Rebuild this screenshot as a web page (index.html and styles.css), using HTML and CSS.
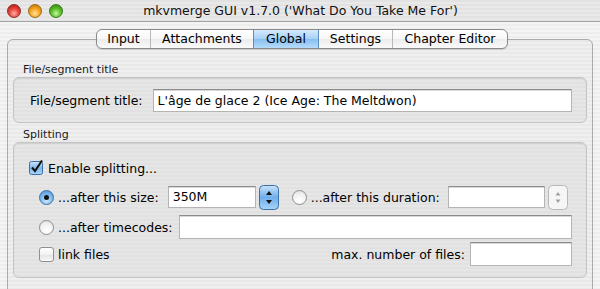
FILE: index.html
```html
<!DOCTYPE html>
<html>
<head>
    <title>mkvmerge GUI</title>
    <link rel="stylesheet" href="styles.css">
</head>
<body>
<div class="window">
    <div class="titlebar">
        <div class="lights">
            <span class="light red"></span>
            <span class="light yellow"></span>
            <span class="light green"></span>
        </div>
        <div class="title">mkvmerge GUI v1.7.0 ('What Do You Take Me For')</div>
    </div>

    <div class="content">
        <ul class="tabs">
            <li class="tab tab-input">Input</li>
            <li class="tab tab-attach">Attachments</li>
            <li class="tab tab-global selected">Global</li>
            <li class="tab tab-settings">Settings</li>
            <li class="tab tab-chapter">Chapter Editor</li>
        </ul>

        <div class="pane">
            <div class="group-title first">File/segment title</div>
            <div class="group title-group">
                <label class="field-label">File/segment title:</label>
                <div class="textbox grow">L'âge de glace 2 (Ice Age: The Meltdwon)</div>
            </div>

            <div class="group-title">Splitting</div>
            <div class="group split-group">
                <div class="row row-enable">
                    <span class="check checked">
                        <svg width="15" height="15" viewBox="0 0 15 15">
                            <defs>
                                <linearGradient id="blueg" x1="0" y1="0" x2="0" y2="1">
                                    <stop offset="0" stop-color="#cfe6fb"/>
                                    <stop offset="0.5" stop-color="#7db8ec"/>
                                    <stop offset="1" stop-color="#aad6fb"/>
                                </linearGradient>
                            </defs>
                            <rect x="0.5" y="1.5" width="13" height="13" rx="2" fill="url(#blueg)" stroke="#3a6fa8"/>
                            <path d="M3 7.5 L6 11 L13 0.5" fill="none" stroke="#111" stroke-width="2"/>
                        </svg>
                    </span>
                    <span class="ctrl-label">Enable splitting...</span>
                </div>

                <div class="row row-size">
                    <span class="radio on"><span class="dot"></span></span>
                    <span class="ctrl-label">...after this size:</span>
                    <div class="textbox size-box">350M</div>
                    <span class="stepper active">
                        <svg width="20" height="25" viewBox="0 0 20 25">
                            <defs>
                                <linearGradient id="stepg" x1="0" y1="0" x2="0" y2="1">
                                    <stop offset="0" stop-color="#c9e3fb"/>
                                    <stop offset="0.5" stop-color="#6eaeea"/>
                                    <stop offset="1" stop-color="#a8d4fa"/>
                                </linearGradient>
                            </defs>
                            <rect x="0.5" y="0.5" width="19" height="24" rx="4" fill="url(#stepg)" stroke="#3a6fa8"/>
                            <path d="M10 6 L13 10 L7 10 Z M10 19 L13 15 L7 15 Z" fill="#111"/>
                        </svg>
                    </span>
                    <span class="radio off second"></span>
                    <span class="ctrl-label">...after this duration:</span>
                    <div class="textbox duration-box"></div>
                    <span class="stepper">
                        <svg width="20" height="25" viewBox="0 0 20 25">
                            <rect x="0.5" y="0.5" width="19" height="24" rx="4" fill="#f6f6f6" stroke="#b8b8b8"/>
                            <path d="M10 7 L12.5 10.5 L7.5 10.5 Z M10 18 L12.5 14.5 L7.5 14.5 Z" fill="#a0a0a0"/>
                        </svg>
                    </span>
                </div>

                <div class="row row-timecodes">
                    <span class="radio off"></span>
                    <span class="ctrl-label">...after timecodes:</span>
                    <div class="textbox grow"></div>
                </div>

                <div class="row row-link">
                    <span class="check"></span>
                    <span class="ctrl-label">link files</span>
                    <span class="spacer"></span>
                    <span class="ctrl-label">max. number of files:</span>
                    <div class="textbox max-box"></div>
                </div>
            </div>
        </div>
    </div>
</div>
</body>
</html>
```

FILE: styles.css
```css
body {
    margin: 0;
    font-family: "DejaVu Sans", "Liberation Sans", sans-serif;
    font-size: 12px;
    color: #000;
}

.window {
    width: 600px;
    height: 289px;
    overflow: hidden;
    background: repeating-linear-gradient(to bottom, #ededed 0, #ededed 2px, #f4f4f4 2px, #f4f4f4 4px);
}

.titlebar {
    height: 21px;
    display: flex;
    align-items: center;
    border-bottom: 1px solid #a3a3a3;
    background: repeating-linear-gradient(to bottom, #e2e2e2 0, #e2e2e2 2px, #e9e9e9 2px, #e9e9e9 4px);
}

.lights {
    display: flex;
    gap: 7px;
    padding-left: 7px;
}

.light {
    width: 14px;
    height: 14px;
    border-radius: 50%;
    box-sizing: border-box;
}

.light.red {
    background: radial-gradient(circle at 50% 70%, #ffb0a8 0, #e8463c 45%, #a31610 100%);
    border: 1px solid #8e2a24;
}

.light.yellow {
    background: radial-gradient(circle at 50% 70%, #ffe4a0 0, #f5a623 45%, #b86e00 100%);
    border: 1px solid #9a6a16;
}

.light.green {
    background: radial-gradient(circle at 50% 70%, #c8f7a0 0, #5cc02a 45%, #2a7c0a 100%);
    border: 1px solid #3d7a20;
}

.title {
    flex: 1;
    text-align: center;
    margin-right: 62px;
    font-size: 12.5px;
    color: #111;
}

.content {
    padding-top: 7px;
}

.tabs {
    list-style: none;
    margin: 0 0 0 96px;
    padding: 0;
    display: flex;
    height: 18px;
    width: max-content;
    border: 1px solid #8a8a8a;
    border-radius: 6px;
    overflow: hidden;
    position: relative;
    z-index: 1;
    background: linear-gradient(to bottom, #ffffff 0, #f7f7f7 50%, #ececec 51%, #fafafa 100%);
    box-shadow: 0 1px 1px rgba(0, 0, 0, 0.15);
}

.tab {
    line-height: 18px;
    font-size: 12.5px;
    text-align: center;
    border-left: 1px solid #b9b9b9;
}

.tab-input {
    width: 53px;
    border-left: none;
}

.tab-attach {
    width: 102px;
}

.tab-global {
    width: 65px;
}

.tab-settings {
    width: 73px;
}

.tab-chapter {
    width: 114px;
}

.tab.selected {
    background: linear-gradient(to bottom, #d5eafc 0, #a6d0f6 50%, #86bff0 51%, #b6dcfb 100%);
    border-left-color: #5d8cc0;
    border-right: 1px solid #5d8cc0;
    width: 64px;
}

.tab.selected + .tab {
    border-left: none;
}

.pane {
    margin: -10px 7px 0 7px;
    height: 260px;
    border: 1px solid #aaaaaa;
    border-radius: 6px;
    padding: 0 5px;
    background: repeating-linear-gradient(to bottom, #e9e9e9 0, #e9e9e9 2px, #efefef 2px, #efefef 4px);
}

.group-title {
    font-size: 11px;
    line-height: 14px;
    height: 14px;
    padding-left: 10px;
    margin-top: 5px;
    color: #1a1a1a;
}

.group-title.first {
    margin-top: 23px;
}

.group {
    border: 1px solid #c4c4c4;
    border-radius: 6px;
    background: repeating-linear-gradient(to bottom, #e1e1e1 0, #e1e1e1 2px, #e6e6e6 2px, #e6e6e6 4px);
    box-shadow: inset 0 1px 1px rgba(0, 0, 0, 0.08);
}

.title-group {
    height: 44px;
    display: flex;
    align-items: center;
    padding: 0 14px 0 16px;
    gap: 10px;
}

.field-label {
    font-size: 12.5px;
}

.textbox {
    height: 20px;
    box-sizing: border-box;
    background: #fff;
    border: 1px solid #b4b4b4;
    border-top-color: #8c8c8c;
    box-shadow: inset 0 1px 0 #d8d8d8;
    font-size: 12.5px;
    line-height: 19px;
    padding: 0 4px;
    white-space: nowrap;
}

.title-group .textbox {
    height: 23px;
    line-height: 21px;
}

.grow {
    flex: 1;
}

.split-group {
    height: 134px;
    padding: 0 14px 0 17px;
}

.row {
    display: flex;
    align-items: center;
}

.row-enable {
    height: 21px;
    margin-top: 15px;
    margin-left: -2px;
}

.row-size,
.row-timecodes,
.row-link {
    padding-left: 8px;
}

.row-size {
    height: 26px;
    margin-top: 5px;
}

.row-timecodes {
    height: 24px;
    margin-top: 5px;
}

.row-link {
    height: 24px;
    margin-top: 3px;
}

.ctrl-label {
    font-size: 12.5px;
    margin-left: 4px;
}

.check {
    width: 15px;
    height: 15px;
    box-sizing: border-box;
    display: inline-block;
}

.check:not(.checked) {
    border: 1px solid #8f8f8f;
    border-radius: 3px;
    background: linear-gradient(to bottom, #ffffff 0, #f2f2f2 50%, #e2e2e2 51%, #fafafa 100%);
}

.check svg {
    display: block;
    margin-top: -1px;
}

.radio {
    width: 15px;
    height: 15px;
    box-sizing: border-box;
    border-radius: 50%;
    display: inline-flex;
    align-items: center;
    justify-content: center;
}

.radio.on {
    border: 1px solid #3a6fa8;
    background: radial-gradient(circle at 50% 75%, #cbe6fd 0, #79b6ec 55%, #4b8fd2 100%);
}

.radio.off {
    border: 1px solid #8f8f8f;
    background: radial-gradient(circle at 50% 75%, #ffffff 0, #f2f2f2 55%, #d8d8d8 100%);
}

.dot {
    width: 5px;
    height: 5px;
    border-radius: 50%;
    background: #111;
}

.radio.second {
    margin-left: 13px;
}

.size-box {
    width: 88px;
    height: 22px;
    line-height: 20px;
    margin-left: 9px;
}

.stepper {
    margin-left: 3px;
    display: inline-block;
    height: 25px;
}

.stepper svg {
    display: block;
}

.duration-box {
    width: 97px;
    height: 22px;
    margin-left: 8px;
}

.row-timecodes .textbox {
    height: 24px;
    margin-left: 6px;
}

.spacer {
    flex: 1;
}

.max-box {
    width: 102px;
    height: 24px;
    margin-left: 5px;
}
```
